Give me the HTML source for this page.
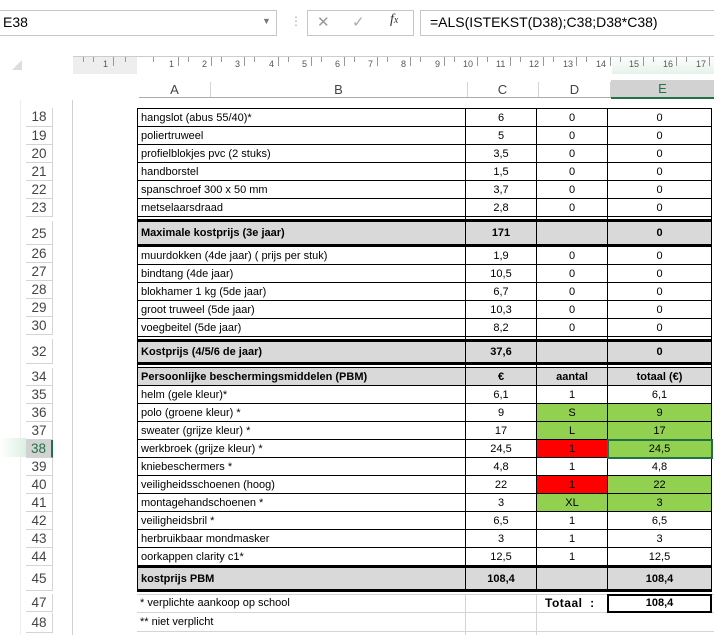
<!DOCTYPE html>
<html><head><meta charset="utf-8"><style>
body{margin:0;width:714px;height:635px;overflow:hidden;background:#fff;font-family:"Liberation Sans",Arial,sans-serif;position:relative}
.a{position:absolute}
table{border-collapse:collapse;table-layout:fixed;position:absolute;left:137px;font-size:11px;color:#000}
td{border:1px solid #000;padding:0 3px;text-align:center;white-space:nowrap;overflow:hidden;height:17px;line-height:14px}
td.l{text-align:left}
tr.g td{background:#d9d9d9;font-weight:bold;border-top:3px solid #000;border-bottom:3px solid #000}
tr.sp td{height:2px;border-left:1px solid #000;border-right:1px solid #000;border-top:1px solid #000;border-bottom:none;padding:0;line-height:0}
.gr{background:#92d050}.rd{background:#ff0000}
.rh{position:absolute;left:26px;width:26px;text-align:center;font-size:13.5px;color:#444;border-bottom:1px solid #d4d4d4;border-right:1px solid #d4d4d4}
.tk{position:absolute;top:0;width:1px;height:5px;background:#999}
</style></head><body>
<!-- formula bar -->
<div class="a" style="left:0;top:10px;width:276px;height:24px;border:1px solid #c6c6c6;border-left:none"></div>
<div class="a" style="left:3px;top:14px;font-size:14px">E38</div>
<div class="a" style="left:262px;top:16px;font-size:9px;color:#777">▼</div>
<div class="a" style="left:290px;top:14px;font-size:12px;color:#aaa">⋮</div>
<div class="a" style="left:307px;top:10px;width:105px;height:24px;border:1px solid #c6c6c6"></div>
<div class="a" style="left:317px;top:13px;font-size:15px;color:#999">✕</div>
<div class="a" style="left:352px;top:13px;font-size:15px;color:#aaa">✓</div>
<div class="a" style="left:390px;top:12px;font-size:14px;font-style:italic;font-family:'Liberation Serif',serif;color:#333">f<span style="font-size:10px">x</span></div>
<div class="a" style="left:420px;top:10px;width:294px;height:24px;border:1px solid #c6c6c6;border-right:none"></div>
<div class="a" style="left:430px;top:14px;font-size:14px">=ALS(ISTEKST(D38);C38;D38*C38)</div>
<!-- ruler -->
<div class="a" style="left:12px;top:60px;width:0;height:0;border-left:10px solid transparent;border-bottom:10px solid #ddd"></div>
<div class="a" style="left:73px;top:56px;width:64px;height:18px;background:#eee"></div>
<div class="a" style="left:612px;top:56px;width:102px;height:18px;background:linear-gradient(#fff,#e6f2e9)"></div>
<div class="a" style="left:73px;top:56px;width:641px;height:18px;font-size:9px;color:#555;border-top:1px solid #ccc">
<span class="tk" style="left:10px"></span><span class="tk" style="left:20px"></span><span class="tk" style="left:40px;height:9px"></span><span class="tk" style="left:52px"></span>
<span class="tk" style="left:80px"></span><span class="tk" style="left:105px;height:9px"></span><span class="tk" style="left:115px"></span><span class="tk" style="left:138px;height:9px"></span><span class="tk" style="left:148px"></span><span class="tk" style="left:171px;height:9px"></span><span class="tk" style="left:181px"></span><span class="tk" style="left:205px;height:9px"></span><span class="tk" style="left:215px"></span><span class="tk" style="left:238px;height:9px"></span><span class="tk" style="left:248px"></span><span class="tk" style="left:271px;height:9px"></span><span class="tk" style="left:281px"></span><span class="tk" style="left:304px;height:9px"></span><span class="tk" style="left:314px"></span><span class="tk" style="left:337px;height:9px"></span><span class="tk" style="left:347px"></span><span class="tk" style="left:371px;height:9px"></span><span class="tk" style="left:381px"></span><span class="tk" style="left:404px;height:9px"></span><span class="tk" style="left:414px"></span><span class="tk" style="left:437px;height:9px"></span><span class="tk" style="left:447px"></span><span class="tk" style="left:470px;height:9px"></span><span class="tk" style="left:480px"></span><span class="tk" style="left:503px;height:9px"></span><span class="tk" style="left:513px"></span><span class="tk" style="left:537px;height:9px"></span><span class="tk" style="left:547px"></span><span class="tk" style="left:570px;height:9px"></span><span class="tk" style="left:580px"></span><span class="tk" style="left:603px;height:9px"></span><span class="tk" style="left:613px"></span><span class="tk" style="left:636px;height:9px"></span>
<span class="a" style="left:30px;top:2px">1</span><span class="a" style="left:96px;top:2px">1</span><span class="a" style="left:129px;top:2px">2</span><span class="a" style="left:162px;top:2px">3</span><span class="a" style="left:196px;top:2px">4</span><span class="a" style="left:229px;top:2px">5</span><span class="a" style="left:262px;top:2px">6</span><span class="a" style="left:295px;top:2px">7</span><span class="a" style="left:328px;top:2px">8</span><span class="a" style="left:362px;top:2px">9</span><span class="a" style="left:390px;top:2px">10</span><span class="a" style="left:423px;top:2px">11</span><span class="a" style="left:456px;top:2px">12</span><span class="a" style="left:490px;top:2px">13</span><span class="a" style="left:523px;top:2px">14</span><span class="a" style="left:556px;top:2px">15</span><span class="a" style="left:590px;top:2px">16</span><span class="a" style="left:623px;top:2px">17</span></div>
<!-- column headers -->
<div class="a" style="left:139px;top:80px;width:575px;height:17px;border-bottom:1px solid #ababab;font-size:13px;color:#444">
<span class="a" style="left:0;width:71px;text-align:center;top:2px;border-right:1px solid #d4d4d4;height:15px">A</span>
<span class="a" style="left:71px;width:257px;text-align:center;top:2px;border-right:1px solid #d4d4d4;height:15px">B</span>
<span class="a" style="left:328px;width:71px;text-align:center;top:2px;border-right:1px solid #d4d4d4;height:15px">C</span>
<span class="a" style="left:400px;width:71px;text-align:center;top:2px;border-right:1px solid #d4d4d4;height:15px">D</span>
<span class="a" style="left:472px;width:103px;text-align:center;top:0;height:17px;line-height:17px;background:#d2d2d2;border-bottom:2px solid #217346;color:#217346">E</span></div>
<div class="a" style="left:72px;top:100px;width:1px;height:535px;background:#d0d0d0"></div>
<div class="a" style="left:0;top:100px;width:20px;height:535px;border-right:1px solid #eee"></div>
<div class="a" style="left:0;top:438px;width:26px;height:19px;background:linear-gradient(90deg,#fff,#dcefe2)"></div>
<!-- row headers -->
<div class="rh" style="top:108px;height:18px;line-height:18px">18</div>
<div class="rh" style="top:127px;height:17px;line-height:17px">19</div>
<div class="rh" style="top:145px;height:17px;line-height:17px">20</div>
<div class="rh" style="top:163px;height:17px;line-height:17px">21</div>
<div class="rh" style="top:181px;height:17px;line-height:17px">22</div>
<div class="rh" style="top:199px;height:17px;line-height:17px">23</div>
<div class="rh" style="top:221px;height:23px;line-height:26px">25</div>
<div class="rh" style="top:245px;height:17px;line-height:17px">26</div>
<div class="rh" style="top:263px;height:17px;line-height:17px">27</div>
<div class="rh" style="top:281px;height:17px;line-height:17px">28</div>
<div class="rh" style="top:299px;height:17px;line-height:17px">29</div>
<div class="rh" style="top:317px;height:17px;line-height:17px">30</div>
<div class="rh" style="top:339px;height:24px;line-height:26px">32</div>
<div class="rh" style="top:368px;height:17px;line-height:17px">34</div>
<div class="rh" style="top:386px;height:17px;line-height:17px">35</div>
<div class="rh" style="top:404px;height:17px;line-height:17px">36</div>
<div class="rh" style="top:422px;height:17px;line-height:17px">37</div>
<div class="rh" style="top:440px;height:17px;line-height:17px;background:#d2d2d2;color:#217346;border-right:2px solid #217346;width:25px">38</div>
<div class="rh" style="top:458px;height:17px;line-height:17px">39</div>
<div class="rh" style="top:476px;height:17px;line-height:17px">40</div>
<div class="rh" style="top:494px;height:17px;line-height:17px">41</div>
<div class="rh" style="top:512px;height:17px;line-height:17px">42</div>
<div class="rh" style="top:530px;height:17px;line-height:17px">43</div>
<div class="rh" style="top:548px;height:17px;line-height:17px">44</div>
<div class="rh" style="top:566px;height:24px;line-height:26px">45</div>
<div class="rh" style="top:594px;height:17px;line-height:18px">47</div>
<div class="rh" style="top:613px;height:19px;line-height:20px">48</div>
<!-- main table -->
<table style="top:108px;width:574px">
<col style="width:328px"><col style="width:71px"><col style="width:71px"><col style="width:104px">
<tr><td class="l">hangslot (abus 55/40)*</td><td>6</td><td>0</td><td>0</td></tr>
<tr><td class="l">poliertruweel</td><td>5</td><td>0</td><td>0</td></tr>
<tr><td class="l">profielblokjes pvc (2 stuks)</td><td>3,5</td><td>0</td><td>0</td></tr>
<tr><td class="l">handborstel</td><td>1,5</td><td>0</td><td>0</td></tr>
<tr><td class="l">spanschroef 300 x 50 mm</td><td>3,7</td><td>0</td><td>0</td></tr>
<tr><td class="l">metselaarsdraad</td><td>2,8</td><td>0</td><td>0</td></tr>
<tr class="sp"><td></td><td></td><td></td><td></td></tr>
<tr class="g"><td class="l" style="height:22px">Maximale kostprijs (3e jaar)</td><td>171</td><td></td><td>0</td></tr>
<tr><td class="l">muurdokken (4de jaar) ( prijs per stuk)</td><td>1,9</td><td>0</td><td>0</td></tr>
<tr><td class="l">bindtang (4de jaar)</td><td>10,5</td><td>0</td><td>0</td></tr>
<tr><td class="l">blokhamer 1 kg (5de jaar)</td><td>6,7</td><td>0</td><td>0</td></tr>
<tr><td class="l">groot truweel (5de jaar)</td><td>10,3</td><td>0</td><td>0</td></tr>
<tr><td class="l">voegbeitel (5de jaar)</td><td>8,2</td><td>0</td><td>0</td></tr>
<tr class="sp"><td></td><td></td><td></td><td></td></tr>
<tr class="g"><td class="l" style="height:20px">Kostprijs (4/5/6 de jaar)</td><td>37,6</td><td></td><td>0</td></tr>
<tr class="sp"><td></td><td></td><td></td><td></td></tr>
<tr style="font-weight:bold;background:#d9d9d9"><td class="l">Persoonlijke beschermingsmiddelen (PBM)</td><td>€</td><td>aantal</td><td>totaal (€)</td></tr>
<tr><td class="l">helm (gele kleur)*</td><td>6,1</td><td>1</td><td>6,1</td></tr>
<tr><td class="l">polo (groene kleur) *</td><td>9</td><td class="gr">S</td><td class="gr">9</td></tr>
<tr><td class="l">sweater (grijze kleur) *</td><td>17</td><td class="gr">L</td><td class="gr">17</td></tr>
<tr><td class="l">werkbroek (grijze kleur) *</td><td>24,5</td><td class="rd">1</td><td class="gr" style="outline:2px solid #217346;outline-offset:-1px">24,5</td></tr>
<tr><td class="l">kniebeschermers *</td><td>4,8</td><td>1</td><td>4,8</td></tr>
<tr><td class="l">veiligheidsschoenen (hoog)</td><td>22</td><td class="rd">1</td><td class="gr">22</td></tr>
<tr><td class="l">montagehandschoenen *</td><td>3</td><td class="gr">XL</td><td class="gr">3</td></tr>
<tr><td class="l">veiligheidsbril *</td><td>6,5</td><td>1</td><td>6,5</td></tr>
<tr><td class="l">herbruikbaar mondmasker</td><td>3</td><td>1</td><td>3</td></tr>
<tr><td class="l">oorkappen clarity c1*</td><td>12,5</td><td>1</td><td>12,5</td></tr>
<tr class="g"><td class="l" style="height:21px">kostprijs PBM</td><td>108,4</td><td></td><td>108,4</td></tr>
</table>
<!-- footer rows -->
<div class="a" style="left:137px;top:594px;width:577px;height:1px;background:#d4d4d4"></div>
<div class="a" style="left:137px;top:612px;width:577px;height:1px;background:#d4d4d4"></div>
<div class="a" style="left:137px;top:631px;width:577px;height:1px;background:#d4d4d4"></div>
<div class="a" style="left:465px;top:594px;width:1px;height:41px;background:#d4d4d4"></div>
<div class="a" style="left:536px;top:594px;width:1px;height:41px;background:#d4d4d4"></div>
<div class="a" style="left:140px;top:597px;font-size:11px">* verplichte aankoop op school</div>
<div class="a" style="left:140px;top:616px;font-size:11px">** niet verplicht</div>
<div class="a" style="left:545px;top:596px;font-size:12px;font-weight:bold;letter-spacing:0.5px">Totaal&nbsp; :</div>
<div class="a" style="left:607px;top:594px;width:101px;height:15px;border:2px solid #000;background:#fff;font-size:11px;font-weight:bold;text-align:center;line-height:15px">108,4</div>
</body></html>
